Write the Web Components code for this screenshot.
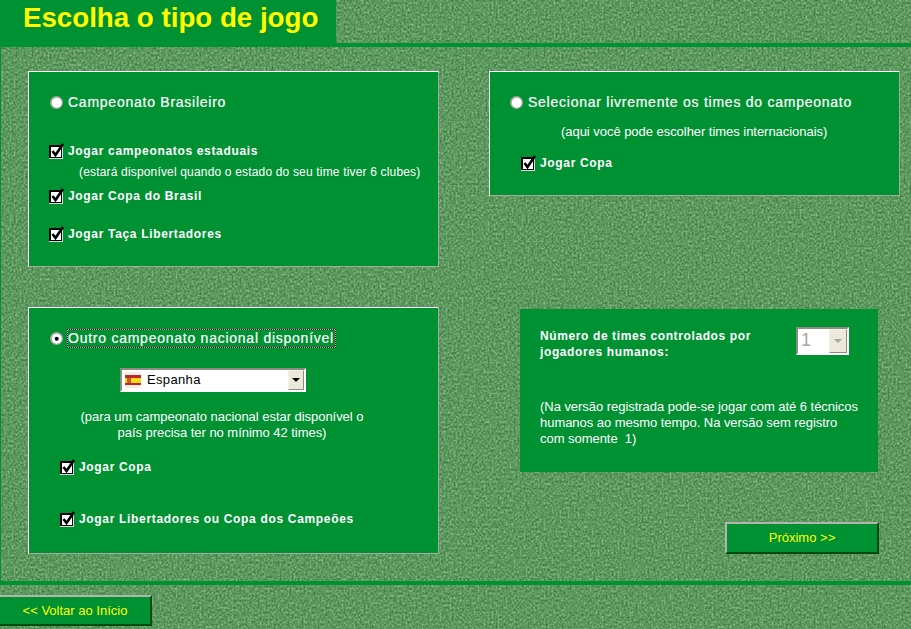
<!DOCTYPE html>
<html lang="pt">
<head>
<meta charset="utf-8">
<title>Escolha o tipo de jogo</title>
<style>
    html, body { margin: 0; padding: 0; height: 100%; overflow: hidden; background: #5f9a5e; }
    body { font-family: "Liberation Sans", Arial, sans-serif; font-size: 12px; color: #fff; }
</style>
</head>
<body>
<game-screen>
    <game-panel slot="left" style="height:196px">
        <game-radio>Campeonato Brasileiro</game-radio>
        <game-check style="margin-top:31px">Jogar campeonatos estaduais</game-check>
        <game-note small style="margin:5px 0 0 31px">(estará disponível quando o estado do seu time tiver 6 clubes)</game-note>
        <game-check style="margin-top:8px">Jogar Copa do Brasil</game-check>
        <game-check style="margin-top:22px">Jogar Taça Libertadores</game-check>
    </game-panel>
    <game-panel slot="left" style="height:247px">
        <game-radio checked focused>Outro campeonato nacional disponível</game-radio>
        <flag-select style="margin:20px 0 0 72px"></flag-select>
        <game-note style="margin:17px 0 0 29px;width:290px;text-align:center">(para um campeonato nacional estar disponível o país precisa ter no mínimo 42 times)</game-note>
        <game-check style="margin:18px 0 0 11px">Jogar Copa</game-check>
        <game-check style="margin:36px 0 0 11px">Jogar Libertadores ou Copa dos Campeões</game-check>
    </game-panel>
    <game-panel slot="right" style="height:125px">
        <game-radio style="margin-left:-1px">Selecionar livremente os times do campeonato</game-radio>
        <game-note style="margin:12px 0 0 52px">(aqui você pode escolher times internacionais)</game-note>
        <game-check style="margin:15px 0 0 11px">Jogar Copa</game-check>
    </game-panel>
    <humans-panel slot="right"></humans-panel>
    <game-button slot="next">Próximo &gt;&gt;</game-button>
    <game-button slot="back">&lt;&lt; Voltar ao Início</game-button>
</game-screen>

<script>
const GREEN = '#009133';

class GameScreen extends HTMLElement {
    constructor() {
        super();
        this.attachShadow({ mode: 'open' });
        this.shadowRoot.innerHTML = `
            <style>
                :host { display: block; position: relative; width: 911px; height: 629px; overflow: hidden; }
                .grass { position: absolute; left: 0; top: 0; width: 911px; height: 629px; }
                .page { position: relative; display: flex; flex-direction: column; height: 629px; }
                .head { height: 43px; border-bottom: 4px solid ${GREEN}; }
                h1 {
                    box-sizing: border-box; width: 336px; height: 43px; margin: 0; padding: 0 0 0 23px;
                    background: ${GREEN}; color: #ffff00;
                    font: bold 27.7px/36px "Liberation Sans", Arial, sans-serif;
                }
                .main {
                    box-sizing: border-box; height: 534px; padding: 24px 0 0 27px;
                    display: flex; gap: 50px;
                    border-left: 1px solid ${GREEN};
                }
                .col { width: 411px; display: flex; flex-direction: column; }
                .left { gap: 40px; }
                .next { display: flex; justify-content: flex-end; width: 390px; margin-top: 50px; }
                .rule { height: 4px; background: ${GREEN}; }
                .foot { padding-top: 10px; }
            </style>
            <svg class="grass" aria-hidden="true">
                <filter id="turf" x="0" y="0" width="100%" height="100%" color-interpolation-filters="sRGB">
                    <feTurbulence type="fractalNoise" baseFrequency="0.5 0.42" numOctaves="2" seed="11"/>
                    <feColorMatrix type="matrix" values="1.9 0 0 0 -0.45  1.9 0 0 0 -0.45  1.9 0 0 0 -0.45  0 0 0 0 1"/>
                    <feComponentTransfer>
                        <feFuncR type="table" tableValues="0.25 0.33 0.40 0.52"/>
                        <feFuncG type="table" tableValues="0.49 0.57 0.63 0.72"/>
                        <feFuncB type="table" tableValues="0.27 0.34 0.40 0.52"/>
                    </feComponentTransfer>
                </filter>
                <rect width="911" height="629" filter="url(#turf)"/>
            </svg>
            <div class="page">
                <div class="head"><h1>Escolha o tipo de jogo</h1></div>
                <div class="main">
                    <div class="col left"><slot name="left"></slot></div>
                    <div class="col"><slot name="right"></slot>
                        <div class="next"><slot name="next"></slot></div>
                    </div>
                </div>
                <div class="rule"></div>
                <div class="foot"><slot name="back"></slot></div>
            </div>`;
    }
}

class GamePanel extends HTMLElement {
    constructor() {
        super();
        this.attachShadow({ mode: 'open' });
        this.shadowRoot.innerHTML = `
            <style>
                :host {
                    display: block; box-sizing: border-box; width: 411px; padding: 21px 0 0 19px;
                    background: ${GREEN};
                    border: 1px solid; border-color: #fff #a8a8a0 #a8a8a0 #fff;
                }
            </style>
            <slot></slot>`;
    }
}

class GameRadio extends HTMLElement {
    constructor() {
        super();
        this.attachShadow({ mode: 'open' });
        const dot = this.hasAttribute('checked') ? '<circle cx="6.7" cy="6.7" r="2" fill="#000"/>' : '';
        this.shadowRoot.innerHTML = `
            <style>
                :host { display: flex; align-items: center; height: 20px; margin-top: -1px; }
                svg { width: 13px; height: 13px; margin: 0 4px 0 2px; flex: none; }
                .label {
                    font: 14px/17px "Liberation Sans", Arial, sans-serif; letter-spacing: .75px;
                    -webkit-text-stroke: .2px #fff; padding: 0 1px 0 0; color: #fff; white-space: nowrap;
                    border: 1px solid transparent;
                }
                :host([focused]) .label {
                    border: 1px dotted #000;
                    background: linear-gradient(${GREEN}, ${GREEN}) padding-box, #ff8fc8 border-box;
                }
            </style>
            <svg viewBox="0 0 13 13" aria-hidden="true">
                <circle cx="6.5" cy="6.5" r="6.5" fill="#a9a99f"/>
                <circle cx="6.8" cy="6.8" r="5" fill="#fff"/>
                ${dot}
            </svg>
            <span class="label"><slot></slot></span>`;
    }
}

class GameCheck extends HTMLElement {
    constructor() {
        super();
        this.attachShadow({ mode: 'open' });
        this.shadowRoot.innerHTML = `
            <style>
                :host { display: flex; align-items: center; height: 16px; }
                svg { width: 16px; height: 16px; margin: 0 3px 0 1px; flex: none; }
                .label {
                    font: bold 12px/16px "Liberation Sans", Arial, sans-serif; letter-spacing: .67px; color: #fff;
                }
            </style>
            <svg viewBox="0 0 16 16" aria-hidden="true" shape-rendering="crispEdges">
                <rect x="0" y="2" width="14" height="14" fill="#dcdcd4"/>
                <rect x="0" y="2" width="13" height="13" fill="#000"/>
                <rect x="2" y="4" width="10" height="10" fill="#fff"/>
                <path d="M3.5 8l3 4 7.5-11" fill="none" stroke="#000" stroke-width="2.6" shape-rendering="auto"/>
            </svg>
            <span class="label"><slot></slot></span>`;
    }
}

class GameNote extends HTMLElement {
    constructor() {
        super();
        this.attachShadow({ mode: 'open' });
        this.shadowRoot.innerHTML = `
            <style>
                :host { display: block; font: 13px/16px "Liberation Sans", Arial, sans-serif; letter-spacing: -.04px; color: #fff; }
                :host([small]) { font-size: 12px; letter-spacing: .17px; }
            </style>
            <slot></slot>`;
    }
}

class FlagSelect extends HTMLElement {
    constructor() {
        super();
        this.attachShadow({ mode: 'open' });
        this.shadowRoot.innerHTML = `
            <style>
                :host {
                    display: flex; box-sizing: border-box; width: 186px; height: 24px;
                    background: #fff; border: 2px solid; border-color: #8e8c80 #fff #fff #8e8c80;
                    align-items: center; color: #000;
                }
                svg { width: 16px; height: 16px; margin: 0 0 0 3px; flex: none; }
                .value { flex: 1; margin-left: 6px; font: 13px/16px "Liberation Sans", Arial, sans-serif; letter-spacing: .35px; }
                .arrow {
                    box-sizing: border-box; width: 16px; height: 20px; background: #ece9d8;
                    border: 1px solid; border-color: #f4f2e8 #8e8c80 #8e8c80 #f4f2e8;
                    display: flex; align-items: center; justify-content: center;
                }
                .arrow i { border: 4px solid transparent; border-top-color: #000; border-bottom: 0; }
            </style>
            <svg viewBox="0 0 16 16" aria-hidden="true" shape-rendering="crispEdges">
                <rect width="16" height="16" fill="#f4efe2"/>
                <rect y="3" width="16" height="10" fill="#c0262c"/>
                <rect y="6" width="16" height="5" fill="#f5d81c"/>
                <rect x="2" y="6" width="4" height="5" fill="#b8622c"/>
            </svg>
            <span class="value">Espanha</span>
            <span class="arrow"><i></i></span>`;
    }
}

class HumansPanel extends HTMLElement {
    constructor() {
        super();
        this.attachShadow({ mode: 'open' });
        this.shadowRoot.innerHTML = `
            <style>
                :host {
                    display: block; box-sizing: border-box; width: 358px; height: 163px;
                    margin: 113px 0 0 31px; padding: 19px 20px 0 20px;
                    background: ${GREEN}; color: #fff;
                }
                .top { display: flex; justify-content: space-between; height: 71px; }
                b { font: bold 12px/16px "Liberation Sans", Arial, sans-serif; letter-spacing: .61px; width: 240px; }
                .count {
                    box-sizing: border-box; display: flex; width: 53px; height: 28px; margin: -1px 9px 0 0;
                    background: #fff; border: 2px solid; border-color: #8e8c80 #fff #fff #8e8c80; color: #a8a8a0;
                    font: 18px/22px "Liberation Sans", Arial, sans-serif;
                }
                .count span { flex: 1; padding-left: 3px; }
                .count i {
                    box-sizing: border-box; width: 18px; height: 24px; background: #ece9d8;
                    border: 1px solid; border-color: #f4f2e8 #8e8c80 #8e8c80 #f4f2e8;
                    display: flex; align-items: center; justify-content: center;
                }
                .count i::after { content: ""; border: 4px solid transparent; border-top-color: #a8a8a0; border-bottom: 0; }
                p { margin: 0; font: 13px/16px "Liberation Sans", Arial, sans-serif; letter-spacing: -.04px; white-space: pre-wrap; }
            </style>
            <div class="top"><b>Número de times controlados por jogadores humanos:</b><div class="count"><span>1</span><i></i></div></div>
            <p>(Na versão registrada pode-se jogar com até 6 técnicos humanos ao mesmo tempo. Na versão sem registro com somente  1)</p>`;
    }
}

class GameButton extends HTMLElement {
    constructor() {
        super();
        this.attachShadow({ mode: 'open' });
        this.shadowRoot.innerHTML = `
            <style>
                :host {
                    display: flex; box-sizing: border-box; align-items: center; justify-content: center;
                    background: ${GREEN}; color: #ffff00;
                    border: 2px solid; border-color: #b4b4ac #004a14 #004a14 #b4b4ac;
                    font: 13px/16px "Liberation Sans", Arial, sans-serif;
                }
                :host([slot="next"]) { width: 154px; height: 32px; }
                :host([slot="back"]) { width: 152px; height: 31px; border-left: 0; }
            </style>
            <slot></slot>`;
    }
}

customElements.define('game-screen', GameScreen);
customElements.define('game-panel', GamePanel);
customElements.define('game-radio', GameRadio);
customElements.define('game-check', GameCheck);
customElements.define('game-note', GameNote);
customElements.define('flag-select', FlagSelect);
customElements.define('humans-panel', HumansPanel);
customElements.define('game-button', GameButton);
</script>
</body>
</html>
